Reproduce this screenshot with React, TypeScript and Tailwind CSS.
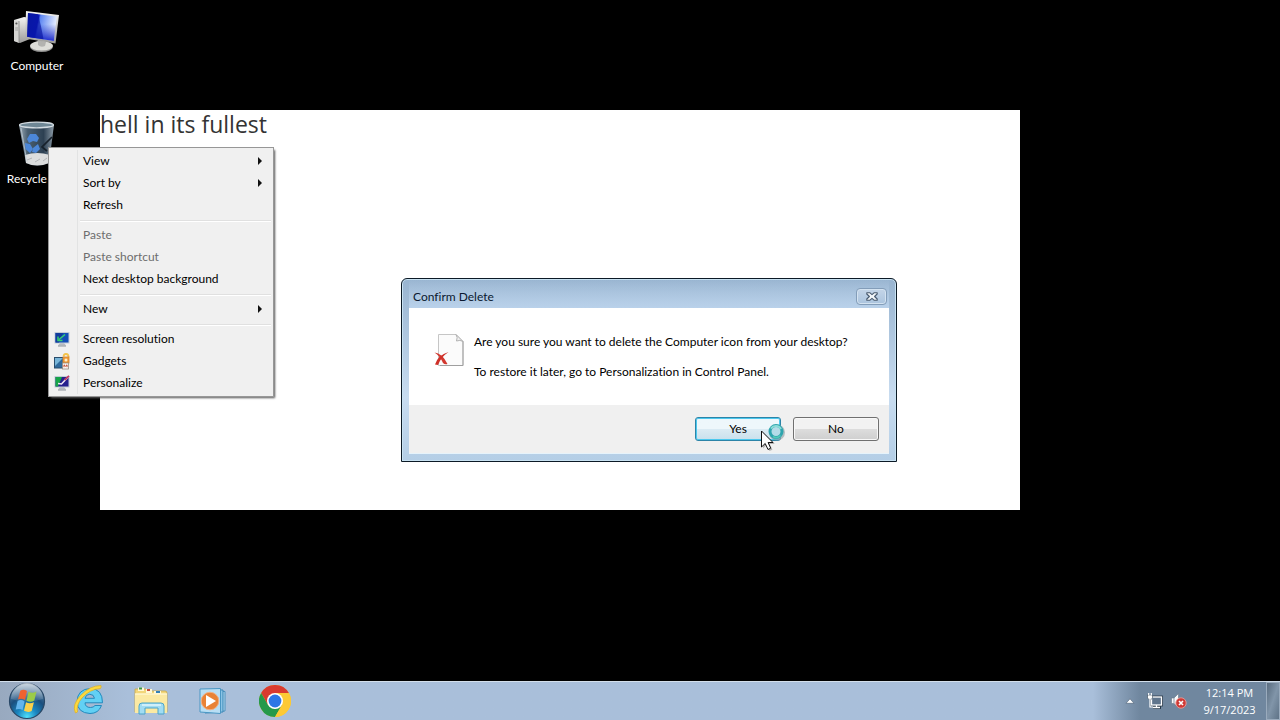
import React from "react";

function ComputerIcon() {
  return (
    <svg width="48" height="48" viewBox="0 0 48 48" aria-hidden="true">
      <defs>
        <linearGradient id="pcScreen" x1="0" y1="0" x2="1" y2="0.2">
          <stop offset="0" stopColor="#0a1fa8" />
          <stop offset="0.4" stopColor="#0b1cc0" />
          <stop offset="0.46" stopColor="#5d86f2" />
          <stop offset="1" stopColor="#e3ecff" />
        </linearGradient>
        <linearGradient id="pcScreenLow" x1="0" y1="0" x2="0" y2="1">
          <stop offset="0.4" stopColor="#0a18b8" stopOpacity="0" />
          <stop offset="1" stopColor="#0a18c8" stopOpacity="0.9" />
        </linearGradient>
        <linearGradient id="pcMetal" x1="0" y1="0" x2="0" y2="1">
          <stop offset="0" stopColor="#f4f4f2" />
          <stop offset="1" stopColor="#9c9c9a" />
        </linearGradient>
      </defs>
      <path d="M1 13 L11 10 L17 11 V32 L7 36 L1 34 Z" fill="url(#pcMetal)" />
      <path d="M1 13 L6 14 V36 L1 34 Z" fill="#d4d4d2" />
      <path d="M6 14 V36" stroke="#808080" strokeWidth="0.8" />
      <circle cx="3.4" cy="16.5" r="1.1" fill="#555" />
      <path d="M2.2 21 H5 M2.2 23 H5" stroke="#8a8a8a" strokeWidth="0.7" />
      <path d="M25 31 L34 33 L33 40 H24 Z" fill="#a9a9a9" />
      <ellipse cx="28.5" cy="39.8" rx="11.5" ry="5.2" fill="#8f8f8e" />
      <ellipse cx="28.5" cy="38.8" rx="11.5" ry="4.8" fill="#deded9" />
      <path d="M25 33 L33 35 L32 39 Q28 41 25 38 Z" fill="#b3b3b0" />
      <path d="M13 4 L46 8 L42.5 36.5 L12 31.5 Z" fill="url(#pcMetal)" />
      <path d="M15 6 L43.8 9.6 L40.8 34 L14.2 29.7 Z" fill="url(#pcScreen)" />
      <path d="M15 6 L43.8 9.6 L40.8 34 L14.2 29.7 Z" fill="url(#pcScreenLow)" />
      <path d="M15 6 L25 7.3 Q28 18 30.5 32.3 L14.2 29.7 Z" fill="#0714a0" fillOpacity="0.65" />
    </svg>
  );
}

function RecycleIcon() {
  return (
    <svg width="48" height="48" viewBox="0 0 48 48" aria-hidden="true">
      <defs>
        <linearGradient id="binGlass" x1="0" y1="0" x2="1" y2="0">
          <stop offset="0" stopColor="#9babb7" />
          <stop offset="0.25" stopColor="#4a5f70" />
          <stop offset="0.7" stopColor="#2d4052" />
          <stop offset="1" stopColor="#8d9ca8" />
        </linearGradient>
      </defs>
      <path d="M6 6 H41 L36 44 Q24 49 13 44 Z" fill="url(#binGlass)" />
      <path d="M12 36 Q24 32 37 36 L36 44 Q24 49 13 44 Z" fill="#dcdddd" />
      <path d="M14 41 L19 39 M22 43 L27 40 M30 42 L34 39" stroke="#b4b6b8" strokeWidth="1" fill="none" />
      <g fill="#4c87d8">
        <path d="M14 20 L17 15 L23 15 L26 19 L24 23 L20 22 L16 24 Z" />
        <path d="M12 24 L17 25 L20 30 L17 34 L12.5 30 Z" />
        <path d="M20 29 L25 25 L27 30 L23 34 L19 33 Z" />
      </g>
      <path d="M39 18 L29 28 L34 32" stroke="#17212b" strokeWidth="1.7" fill="none" />
      <ellipse cx="23.5" cy="6" rx="17" ry="2.8" fill="#6f8795" stroke="#d3dbe1" strokeWidth="1.3" />
      <path d="M8 9 L14 43" stroke="#c9d3da" strokeWidth="1" opacity="0.7" />
    </svg>
  );
}

function MonitorIcon({ brush }: { brush?: boolean }) {
  return (
    <svg width="16" height="16" viewBox="0 0 16 16" aria-hidden="true">
      <path d="M6 12 H10 L12 14.5 H4 Z" fill="#b4bac0" />
      <path d="M4 15 H12" stroke="#8d949b" />
      <rect x="0.5" y="1" width="15" height="11.5" fill="#c3ccd6" />
      <rect x="1.5" y="2" width="13" height="9.5" fill={brush ? "#25208e" : "#124fb8"} />
      {brush ? (
        <>
          <path d="M1.5 2 H8 L4 11.5 H1.5 Z" fill="#15a548" />
          <path d="M4 8.5 L7.5 9 L15 1" stroke="#efe6f5" strokeWidth="1.6" fill="none" />
          <path d="M10.5 5 L15 0.8" stroke="#c03a64" strokeWidth="1.8" />
        </>
      ) : (
        <>
          <path d="M1.5 2 H9 L5 11.5 H1.5 Z" fill="#123b9c" />
          <path d="M11 3.5 L5 8.5 M4 5.5 V9.5 H8.5" stroke="#37cf70" strokeWidth="1.5" fill="none" />
        </>
      )}
    </svg>
  );
}

function GadgetsIcon() {
  return (
    <svg width="16" height="17" viewBox="0 0 16 17" aria-hidden="true">
      <path d="M9.5 3.5 Q10 0.8 12 1 Q14.5 1.2 14.5 4" stroke="#f4c34c" strokeWidth="1.8" fill="none" />
      <rect x="0.5" y="4.5" width="9" height="10.5" fill="#2f6a9c" stroke="#294d6c" />
      <path d="M1 5 H9 L1 13 Z" fill="#78b5d8" />
      <rect x="9" y="4" width="6" height="6" fill="#ef9b3a" stroke="#d98428" strokeWidth="0.8" />
      <circle cx="12" cy="7" r="1.5" fill="#fff0c8" />
      <rect x="8.5" y="10" width="6" height="6" fill="#fafafa" stroke="#998a7a" strokeWidth="0.8" />
      <path d="M10 14.2 V11.8 L11.5 13.2 L13 11.8 V14.2" stroke="#c04428" strokeWidth="1" fill="none" />
    </svg>
  );
}

function DeletePageIcon() {
  return (
    <svg width="32" height="34" viewBox="0 0 32 34" aria-hidden="true">
      <path d="M4.5 0.5 H22 L29 7.5 V31.5 H4.5 Z" fill="#fbfbfb" stroke="#c6c6c6" />
      <path d="M29 7.5 V31.5 H6" stroke="#9f9f9f" fill="none" />
      <path d="M22 0.5 Q24 3.5 22.5 7 Q26 5.5 29 7.5 Z" fill="#f0f0f0" stroke="#aaa" strokeWidth="0.9" />
      <path d="M0.5 18.5 Q8 19 13.5 30 Q11 31 9 29 Q6 22 0.5 18.5 Z" fill="#d2382f" />
      <path d="M14.5 18 Q7 23 4 31 L1 30.5 Q4 21 14.5 18 Z" fill="#cf3028" />
    </svg>
  );
}

function StartOrb() {
  return (
    <svg width="38" height="38" viewBox="0 0 38 38" aria-hidden="true">
      <defs>
        <radialGradient id="orb" cx="0.5" cy="0.95" r="0.95">
          <stop offset="0" stopColor="#4fe0fa" />
          <stop offset="0.3" stopColor="#1a86c0" />
          <stop offset="0.6" stopColor="#1b4f7e" />
          <stop offset="1" stopColor="#6f8fac" />
        </radialGradient>
        <linearGradient id="orbShine" x1="0" y1="0" x2="0" y2="1">
          <stop offset="0" stopColor="#fff" stopOpacity="0.65" />
          <stop offset="1" stopColor="#fff" stopOpacity="0.08" />
        </linearGradient>
      </defs>
      <circle cx="19" cy="19" r="17.5" fill="url(#orb)" stroke="#284766" strokeWidth="1.2" />
      <path d="M3 17 A16 16 0 0 1 35 17 Q19 22 3 17 Z" fill="url(#orbShine)" />
      <path d="M12.3 8.7 Q15.5 6.5 19 9 L17 18 Q13.5 15.7 10 17.4 Z" fill="#ef6230" />
      <path d="M20.5 9.8 Q24.5 12 28.5 9.6 L26.3 18.6 Q22.5 21 18.5 18.7 Z" fill="#9bcb48" />
      <path d="M9.6 19 Q13 17 16.6 19.4 L14.6 28 Q11.5 26 7.7 27.6 Z" fill="#63b4ec" />
      <path d="M18 20.3 Q22 22.4 25.9 20.2 L23.7 29 Q20 31 16 28.8 Z" fill="#fbd04a" />
    </svg>
  );
}

function ExplorerEIcon() {
  return (
    <svg width="32" height="32" viewBox="0 0 32 32" aria-hidden="true">
      <path d="M29.5 17.8 H12 Q12.2 22.5 17.5 22.5 Q20.5 22.5 22 20.5 H28.5 Q25.5 28.5 17 28.5 Q4.5 28 4 16.5 Q4.5 4 17.5 3.5 Q29.5 4 29.5 17.8 Z M12 13.3 H21.5 Q21 9.3 16.8 9.3 Q12.7 9.3 12 13.3 Z" fill="#62d0f4" stroke="#2489bd" strokeWidth="1" fillRule="evenodd" />
      <path d="M2.5 28 Q-1.5 20 7.5 10.5 Q17 0.5 28 0.5 Q28.5 2 27.5 3.5 Q17 4 9 13 Q3 20 4.5 27 Z" fill="#fcd93d" stroke="#dcae25" strokeWidth="0.7" />
    </svg>
  );
}

function FolderIcon() {
  return (
    <svg width="34" height="32" viewBox="0 0 34 32" aria-hidden="true">
      <path d="M1 4 H12 L14 6 H31 Q33 6 33 8 V27 H1 Z" fill="#f2d67a" stroke="#c9a849" strokeWidth="0.8" />
      <path d="M4 2.5 H10 V6 H4 Z" fill="#fff8d6" /><path d="M5 3.5 H8" stroke="#379647" strokeWidth="2" />
      <path d="M12 4 H18 V8 H12 Z" fill="#fff8d6" /><path d="M13 5 H16" stroke="#c94c3a" strokeWidth="2" />
      <path d="M20 6 H27 V10 H20 Z" fill="#fff8d6" /><path d="M22 7 H26" stroke="#3280b8" strokeWidth="2" />
      <path d="M1 9 H33 V28 H1 Z" fill="#fbe9a2" />
      <path d="M1 9 H33" stroke="#fff7cf" strokeWidth="1.4" />
      <path d="M5 29 V21 Q5 18 8 18 H27 Q30 18 30 21 V29 H24 V23 H11 V29 Z" fill="#a1dcf2" stroke="#4ba4c9" />
      <path d="M8 20 H27" stroke="#dff6fd" strokeWidth="1.5" />
    </svg>
  );
}

function MediaIcon() {
  return (
    <svg width="28" height="28" viewBox="0 0 28 28" aria-hidden="true">
      <path d="M9 4 L26 4.5 V24 L9 25 Z" fill="#b5daf0" stroke="#4c93bf" />
      <path d="M6 2.5 L24 3 V25 L6 26 Z" fill="#8ac4e6" stroke="#3b86b4" />
      <path d="M1 2 L21.5 1.5 V26.5 L1 25 Z" fill="#b8def4" stroke="#4a97c4" />
      <circle cx="11" cy="14" r="8.8" fill="#e98235" stroke="#f0b083" />
      <path d="M7 8 L17 14 L7 20 Z" fill="#fff" />
    </svg>
  );
}

function BrowserWheelIcon() {
  return (
    <svg width="32" height="32" viewBox="0 0 32 32" aria-hidden="true">
      <circle cx="16" cy="16" r="16" fill="#fcc934" />
      <path d="M2.14 8 A16 16 0 0 1 29.86 8 H16 L9.07 20 Z" fill="#d93a2f" />
      <path d="M2.14 8 A16 16 0 0 0 16 32 L22.93 20 L16 24 L9.07 20 Z" fill="#25994a" />
      <path d="M29.86 8 A16 16 0 0 1 16 32 L22.93 20 L22 11 L16 8 Z" fill="#fcc934" />
      <circle cx="16" cy="16" r="8" fill="#fff" />
      <circle cx="16" cy="16" r="6.4" fill="#2c76e6" />
    </svg>
  );
}

function NetworkIcon() {
  return (
    <svg width="16" height="16" viewBox="0 0 16 16" aria-hidden="true">
      <rect x="4.5" y="4" width="10" height="8" fill="#62768d" stroke="#263645" strokeWidth="2.8" />
      <path d="M6 14.5 H14" stroke="#263645" strokeWidth="2.8" />
      <rect x="4.5" y="4" width="10" height="8" fill="#60758c" stroke="#fff" strokeWidth="1.3" />
      <path d="M9.5 12 V14 M6 14.5 H13" stroke="#fff" strokeWidth="1.3" />
      <path d="M0.5 2 H5.5 V5 Q5 6.5 3 6.5 Q1 6.5 0.5 5 Z" fill="#fff" stroke="#334455" strokeWidth="0.6" />
      <path d="M1.7 0 V2 M4.3 0 V2 M3 6 V14 H6" stroke="#fff" strokeWidth="1.2" fill="none" />
    </svg>
  );
}

function MutedIcon() {
  return (
    <svg width="18" height="16" viewBox="0 0 18 16" aria-hidden="true">
      <path d="M0.5 5 H3 L7.5 0.5 V14.5 L3 10.5 H0.5 Z" fill="#f8fafc" stroke="#657585" strokeWidth="0.6" />
      <path d="M3 5 V10.5" stroke="#8d9aa7" />
      <circle cx="10" cy="10" r="5.2" fill="#d03a36" stroke="#e89b97" strokeWidth="0.9" />
      <path d="M8 8 L12 12 M12 8 L8 12" stroke="#fff" strokeWidth="1.6" />
    </svg>
  );
}

type Entry = { label: string; arrow?: boolean; disabled?: boolean; icon?: React.ReactNode };

const groups: Entry[][] = [
  [{ label: "View", arrow: true }, { label: "Sort by", arrow: true }, { label: "Refresh" }],
  [
    { label: "Paste", disabled: true },
    { label: "Paste shortcut", disabled: true },
    { label: "Next desktop background" },
  ],
  [{ label: "New", arrow: true }],
  [
    { label: "Screen resolution", icon: <MonitorIcon /> },
    { label: "Gadgets", icon: <GadgetsIcon /> },
    { label: "Personalize", icon: <MonitorIcon brush /> },
  ],
];

function ContextMenu() {
  return (
    <div
      role="menu"
      aria-label="Desktop"
      className="absolute left-12 top-[147px] w-[226px] border border-[#979797] bg-[#f0f0f0] py-0.5 shadow-[2px_2px_2px_-1px_#555]"
    >
      {groups.map((group, index) => (
        <div key={index} role="group">
          {index > 0 && (
            <div className="flex h-2">
              <span className="mr-0.5 h-full w-[29px] border-r border-[#e2e3e3]" />
              <span className="mr-0.5 mt-1 h-0.5 flex-1 border-t border-[#e0e0e0] bg-white" />
            </div>
          )}
          {group.map((entry) => (
            <button
              key={entry.label}
              type="button"
              role="menuitem"
              disabled={entry.disabled}
              className="flex h-[22px] w-full items-center text-left text-black disabled:text-[#6d6d6d]"
            >
              <span className="flex h-full w-[29px] items-center border-r border-[#e2e3e3] pl-[5px]">{entry.icon}</span>
              <span className="flex-1 pl-[5px]">{entry.label}</span>
              {entry.arrow && (
                <svg width="4" height="8" viewBox="0 0 4 8" className="mr-[11px]" aria-hidden="true">
                  <path d="M0 0 L4 4 L0 8 Z" fill="#111" />
                </svg>
              )}
            </button>
          ))}
        </div>
      ))}
    </div>
  );
}

function ConfirmDialog() {
  return (
    <section
      role="dialog"
      aria-labelledby="dialog-title"
      className="absolute left-[401px] top-[278px] w-[496px] rounded-t-md border border-[#0c1a26] bg-linear-to-b from-[#98b4d0] via-[#c8dcf0] via-65% to-[#b4cee6] px-[7px] pb-[7px] shadow-[inset_0_0_0_1px_#c8e2f2]"
    >
      <header className="flex h-[29px] items-center justify-between bg-linear-to-b from-transparent to-[#b9d1ea] pl-1 pt-1.5">
        <h1 id="dialog-title" className="text-[#0a1830]">Confirm Delete</h1>
        <button
          type="button"
          aria-label="Close"
          className="mr-0.5 flex h-[17px] w-[31px] items-center justify-center rounded-sm border border-[#839db9] bg-linear-to-b from-[#c4d5e8] to-[#abc4de] shadow-[inset_0_0_0_1px_#d4e3f1]"
        >
          <svg width="12" height="9" viewBox="0 0 12 9" aria-hidden="true">
            <path d="M0.8 0.8 H4 L6 2.6 L8 0.8 H11.2 V2 L8.6 4.5 L11.2 7 V8.2 H8 L6 6.4 L4 8.2 H0.8 V7 L3.4 4.5 L0.8 2 Z" fill="#f2f6fa" stroke="#48596e" strokeWidth="1.1" strokeLinejoin="round" />
          </svg>
        </button>
      </header>
      <div className="flex h-[97px] bg-white pl-[25px] pt-[26px] text-black">
        <DeletePageIcon />
        <div className="pl-2">
          <p className="h-[30px] leading-4">Are you sure you want to delete the Computer icon from your desktop?</p>
          <p className="leading-4">To restore it later, go to Personalization in Control Panel.</p>
        </div>
      </div>
      <footer className="flex h-[49px] items-center justify-end gap-3 border-b border-[#e6f3fb] bg-[#f0f0f0] pr-2.5">
        <button
          type="button"
          className="h-6 w-[86px] rounded-[3px] border border-[#2c84a8] bg-linear-to-b from-[#eef7fb] from-50% via-[#dcebf3] via-50% to-[#c9e0ec] text-black shadow-[inset_0_0_0_1px_#4cc8ee]"
        >
          Yes
        </button>
        <button
          type="button"
          className="h-6 w-[86px] rounded-[3px] border border-[#707070] bg-linear-to-b from-[#f2f2f2] from-50% via-[#dddddd] via-50% to-[#cfcfcf] text-black shadow-[inset_0_0_0_1px_#f8f8f8]"
        >
          No
        </button>
      </footer>
    </section>
  );
}

function BusyPointer() {
  return (
    <svg width="28" height="32" viewBox="0 0 28 32" className="pointer-events-none absolute left-[760px] top-[420px]" aria-hidden="true">
      <circle cx="17" cy="12.5" r="6.5" fill="#b7e5e6" fillOpacity="0.5" stroke="#8b9da1" strokeOpacity="0.6" strokeWidth="3" />
      <circle cx="16" cy="11.5" r="6" fill="#b4dce8" stroke="#2fa5ae" strokeWidth="3" />
      <path d="M11 8.5 A6 6 0 0 1 21 9" stroke="#8adcd8" strokeWidth="2" fill="none" />
      <path d="M20.5 15.5 A6 6 0 0 1 13 16.5" stroke="#53c9b9" strokeWidth="1.6" fill="none" />
      <path d="M3 12.5 V28.5 L6.8 25 L9.5 31 L12.4 29.7 L9.8 24 H14.8 Z" fill="#000" fillOpacity="0.25" />
      <path d="M1.5 11 V27 L5.2 23.5 L8 29.5 L10.7 28.2 L8.1 22.5 H13 Z" fill="#fff" stroke="#111" strokeWidth="1" />
    </svg>
  );
}

function Taskbar() {
  return (
    <footer className="flex h-[39px] items-center border-t border-[#d3dfeb] bg-linear-to-r from-[#98a9bf] via-[#a9bfda] via-10% to-[#a9bfda]">
      <nav aria-label="Taskbar" className="flex h-full flex-1 items-center">
        <button type="button" aria-label="Start" className="flex w-[54px] justify-center"><StartOrb /></button>
        <div className="flex items-center pl-1">
          <button type="button" aria-label="Internet Explorer" className="flex w-[62px] justify-center"><ExplorerEIcon /></button>
          <button type="button" aria-label="Windows Explorer" className="flex w-[62px] justify-center"><FolderIcon /></button>
          <button type="button" aria-label="Media Player" className="flex w-[62px] justify-center"><MediaIcon /></button>
          <button type="button" aria-label="Chrome" className="flex w-[62px] justify-center"><BrowserWheelIcon /></button>
        </div>
      </nav>
      <div className="flex h-full items-center bg-linear-to-r from-[#a9bfda] to-[#70879f] to-25% pl-8">
        <button type="button" aria-label="Show hidden icons" className="mr-3">
          <svg width="10" height="6" viewBox="0 0 10 6" aria-hidden="true">
            <path d="M1 5.3 L5 0.8 L9 5.3 Z" fill="#fff" stroke="#4c5f73" strokeWidth="0.6" />
          </svg>
        </button>
        <button type="button" aria-label="Network" className="mr-2"><NetworkIcon /></button>
        <button type="button" aria-label="Volume muted"><MutedIcon /></button>
        <time
          className="w-[77px] pl-1 text-center font-['Open_Sans','Noto_Sans',sans-serif] text-[11px] leading-[17px] text-white"
          dateTime="2023-09-17T12:14"
        >
          12:14 PM<br />9/17/2023
        </time>
        <button
          type="button"
          aria-label="Show desktop"
          className="h-full w-[14px] border border-[#9aabbd] bg-linear-to-br from-[#5a6d80] via-[#8195a9] to-[#5f7387]"
        />
      </div>
    </footer>
  );
}

export default function App() {
  return (
    <main className="relative flex h-dvh flex-col overflow-hidden bg-black font-[Lato,'Open_Sans',sans-serif] text-[12px] [font-variant-ligatures:none]">
      <div className="flex-1">
        <a href="#computer" className="absolute left-0 top-[7px] flex w-[74px] flex-col items-center gap-[3px] text-white">
          <ComputerIcon />
          <span className="leading-4">Computer</span>
        </a>
        <a href="#recycle" className="absolute left-0 top-[119px] flex w-[74px] flex-col items-center gap-1 whitespace-nowrap text-white">
          <RecycleIcon />
          <span className="leading-4">Recycle Bin</span>
        </a>
        <div className="absolute left-[100px] top-[110px] h-[400px] w-[920px] bg-white">
          <p className="font-['Open_Sans','Noto_Sans',sans-serif] text-[23px] font-medium leading-7 text-[#333]">hell in its fullest</p>
        </div>
        <ContextMenu />
        <ConfirmDialog />
        <BusyPointer />
      </div>
      <Taskbar />
    </main>
  );
}
